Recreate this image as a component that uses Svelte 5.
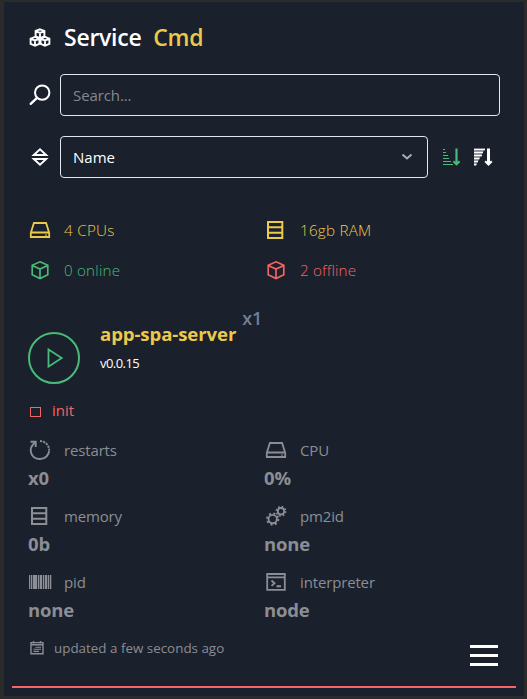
<script>
  const totals = [
    { icon: 'drive', label: '4 CPUs', tone: 'yellow', ls: 0.3 },
    { icon: 'memory', label: '16gb RAM', tone: 'yellow', ls: 0.25 },
    { icon: 'cube', label: '0 online', tone: 'green', ls: 0.2 },
    { icon: 'cube', label: '2 offline', tone: 'red', ls: 0.15 }
  ];
  const details = [
    { icon: 'restart', label: 'restarts', value: 'x0' },
    { icon: 'drive', label: 'CPU', value: '0%' },
    { icon: 'memory', label: 'memory', value: '0b' },
    { icon: 'gears', label: 'pm2id', value: 'none' },
    { icon: 'barcode', label: 'pid', value: 'none' },
    { icon: 'terminal', label: 'interpreter', value: 'node' }
  ];
  const bars = [[1, 1.3], [3, 1.3], [5, 4.2], [10, 1.4], [12, 2.2], [15, 1.3], [17, 2.3], [20, 1.3], [22, 1.3]];
</script>

{#snippet smallCube(x, y)}
  <g transform="translate({x} {y})">
    <path d="M0-4.4 4.4-2.7V2.6L0 4.4-4.4 2.6V-2.7ZM-4.4-2.5 0-.8 4.4-2.5M0-.8V4.4" />
  </g>
{/snippet}

{#snippet icon(name)}
  <svg class="icon" width="24" height="24" viewBox="0 0 24 24" fill="none" stroke="currentColor" stroke-width="1.9">
    {#if name === 'cubes'}
      {@render smallCube(12, 7.7)}
      {@render smallCube(7, 15.3)}
      {@render smallCube(17, 15.3)}
    {:else if name === 'search'}
      <circle cx="14.2" cy="9.6" r="7.2" stroke-width="2" />
      <path d="m9 14.8-6.3 6.1" stroke-width="2.3" stroke-linecap="round" />
    {:else if name === 'sort'}
      <path d="m5.8 10 6.2-5.8 6.2 5.8Z" />
      <path d="m5.8 14 6.2 5.8 6.2-5.8Z" />
    {:else if name === 'drive'}
      <path d="M5.9 5H18.1L21.2 15V19H2.8V15ZM2.8 14.5H21.2" stroke-width="1.8" />
      <path d="M17 17h2" stroke-width="1" />
    {:else if name === 'memory'}
      <path d="M4 3.9H18.3V20.1H4ZM4 9.3H18.4M4 14.7H18.4" stroke-width="2" />
    {:else if name === 'cube'}
      <path d="m12 3.8 7.8 3.5v9.4L12 20.5l-7.8-3.8V7.3ZM4.2 7.5l7.8 3.6 7.8-3.6M12 11v9.3" stroke-width="1.65" />
    {:else if name === 'restart'}
      <path d="M7.2 4.4C-.8 10.3 2.8 21 12 21c5.2 0 9-3.8 9.2-8.6" />
      <path d="M12 3c5 .2 9.1 4.1 9.2 9.1" stroke-dasharray="2.2 1" />
      <path d="M2.5 3.8h5.2V9" />
    {:else if name === 'gears'}
      <circle cx="8.7" cy="15.1" r="4.2" stroke-width="1.9" />
      <circle cx="8.7" cy="15.1" r="5.7" stroke-width="1.9" stroke-dasharray="2 2.477" />
      <circle cx="17" cy="7.2" r="3.2" stroke-width="1.8" />
      <circle cx="17" cy="7.2" r="4.6" stroke-width="1.7" stroke-dasharray="1.7 1.913" />
    {:else if name === 'barcode'}
      {#each bars as [x, w]}
        <rect {x} y="5" width={w} height="14" fill="currentColor" stroke="none" />
      {/each}
    {:else if name === 'terminal'}
      <path d="M3.2 4H20.8V19.8H3.2ZM3 7.4H21" stroke-width="1.8" />
      <path d="m7.5 10.5 3 2.7-3 2.7M12.5 16.2h4.5" />
    {/if}
  </svg>
{/snippet}

<main>
  <header>
    {@render icon('cubes')}
    <h1>Service <span>Cmd</span></h1>
  </header>

  <div class="control search">
    {@render icon('search')}
    <input type="text" placeholder="Search..." />
  </div>

  <div class="control sort">
    {@render icon('sort')}
    <button class="select">
      <span>Name</span>
      <svg width="12" height="8" viewBox="0 0 12 8" fill="none" stroke="#a0aec0" stroke-width="2"><path d="m1.5 1.5 4.5 4 4.5-4" /></svg>
    </button>
    <svg class="asc" width="20" height="20" viewBox="0 0 20 20" fill="none" stroke="currentColor" stroke-width="1">
      <path d="M2 2.5h2M2 5.5h3M2 8.5h5M2 11.5h6M2 14.5h8M2 17.5h10" />
      <path d="M15.5 1.5v15" stroke-width="2.2" /><path d="m12.4 14.3 3.1 3 3.1-3" stroke-width="2" />
    </svg>
    <svg class="desc" width="20" height="20" viewBox="0 0 20 20" fill="none" stroke="currentColor" stroke-width="1.4">
      <path d="M1 1.5H12L2.5 19H1Z" fill="currentColor" fill-opacity=".4" stroke="none" />
      <path d="M1 2.5h11M1 5.5h9M1 8.5h8M1 11.5h5.5M1 14.5h4M1 17.5h2.5" />
      <path d="M15.5 1.5v15" stroke-width="3" /><path d="m12.2 14.2 3.3 3.3 3.3-3.3" stroke-width="2" />
    </svg>
  </div>

  <section class="totals">
    {#each totals as t}
      <div class="total {t.tone}">
        {@render icon(t.icon)}
        <span style="letter-spacing: {t.ls}px">{t.label}</span>
      </div>
    {/each}
  </section>

  <article>
    <div class="app">
      <button class="play" aria-label="Start">
        <svg width="20" height="24" viewBox="0 0 20 24" fill="none" stroke="currentColor" stroke-width="1.8"><path d="m4.5 3.5 13.2 8.6-13.2 8.6Z" /></svg>
      </button>
      <div class="identity">
        <h2>app-spa-server<sup>x1</sup></h2>
        <p>v0.0.15</p>
      </div>
    </div>
    <div class="state"><i></i><span>init</span></div>
    <div class="details">
      {#each details as d}
        <div class="detail">
          <div class="label">{@render icon(d.icon)}<span>{d.label}</span></div>
          <strong>{d.value}</strong>
        </div>
      {/each}
    </div>
    <footer>
      <svg width="16" height="16" viewBox="0 0 16 16" fill="none" stroke="currentColor" stroke-width="1.4">
        <path d="M2 2.6h12v11.2H2ZM2 4.8h12M4.5 1v2.5M11.5 1v2.5" /><path d="M6.5 7.2h5.5M4.5 9.3h7.5M4.5 11.4h5.5" stroke-width="1.1" />
      </svg>
      <span>updated a few seconds ago</span>
      <button class="menu" aria-label="Menu"><i></i><i></i><i></i></button>
    </footer>
  </article>
</main>

<style>
  :global(body) { background: #2b2b2b; }
  main {
    box-sizing: border-box;
    width: 520px;
    height: 694px;
    margin: 2px 3px 3px 4px;
    padding: 20px 8px 8px;
    background: #1a202c;
    color: #fff;
    font: 16px/24px "Open Sans", "Noto Sans", sans-serif;
    display: flex;
    flex-direction: column;
    overflow: hidden;
  }
  h1, h2, p { margin: 0; }
  button { padding: 0; background: none; color: inherit; font: inherit; }
  .icon { flex: none; display: block; }
  header, .control { display: flex; align-items: center; padding-left: 16px; }
  header { height: 32px; gap: 12px; }
  h1 { font-size: 23px; line-height: 31px; margin-top: -1px; font-weight: 650; letter-spacing: -0.25px; }
  h1 span { color: #ecc94b; margin-left: 6px; }
  .control { height: 42px; margin-top: 20px; gap: 8px; }
  input, .select {
    box-sizing: border-box;
    height: 42px;
    border: 1px solid #e2e8f0;
    border-radius: 4px;
    background: transparent;
    padding: 0 12px;
    font: 15px/24px "Open Sans", "Noto Sans", sans-serif;
    color: #fff;
  }
  input { width: 440px; letter-spacing: -0.1px; outline: none; }
  input::placeholder { color: #858890; opacity: 1; }
  .select { width: 368px; display: flex; align-items: center; justify-content: space-between; padding: 0 14px 0 12px; font-weight: 500; }
  .asc { color: #48bb78; margin-left: 5px; }
  .desc { margin-left: 4px; }
  .totals { display: grid; grid-template-columns: 236px 1fr; row-gap: 16px; margin-top: 40px; padding-left: 16px; }
  .total { height: 24px; display: flex; gap: 12px; font-size: 15.2px; font-weight: 300; }
  .yellow { color: #ecc94b; }
  .green { color: #48bb78; }
  .red { color: #f56565; }
  article { margin-top: 30px; flex: 1; border-bottom: 2px solid #f56565; padding-left: 16px; }
  .app { display: flex; gap: 20px; height: 72px; }
  .play {
    box-sizing: border-box;
    width: 52px;
    height: 52px;
    margin-top: 20px;
    border: 2px solid #48bb78;
    border-radius: 50%;
    color: #48bb78;
    display: flex;
    align-items: center;
    justify-content: center;
  }
  .identity { padding-top: 8px; }
  h2 { font-size: 18.6px; line-height: 28px; font-weight: 700; letter-spacing: -0.1px; color: #ecc94b; display: flex; }
  sup { font-size: 18px; line-height: 28px; font-weight: 600; margin: -16px 0 0 6px; color: #718096; }
  .identity p { font-size: 13px; line-height: 20px; margin-top: 5px; letter-spacing: -0.55px; }
  .state { height: 24px; margin-top: 14px; display: flex; align-items: center; color: #f56565; font-size: 15px; }
  .state i { box-sizing: border-box; width: 11px; height: 10px; margin: 3px 11px 0 2px; border: 1px solid; }
  .details { display: grid; grid-template-columns: 236px 1fr; margin-top: 16px; color: #8b8e94; }
  .detail { height: 66px; }
  .label { display: flex; gap: 12px; font-size: 15px; letter-spacing: -0.15px; }
  .detail strong { display: block; font-size: 18.5px; line-height: 28px; font-weight: 700; letter-spacing: -0.2px; margin-top: 2px; }
  footer { display: flex; align-items: center; height: 24px; gap: 9px; color: #8b8e94; font-size: 13.4px; }
  footer svg { margin-left: 1px; }
  .menu { width: 28px; margin: 14px 18px 0 auto; border: 0; display: flex; flex-direction: column; gap: 6px; }
  .menu i { height: 3px; background: #fff; }
</style>
